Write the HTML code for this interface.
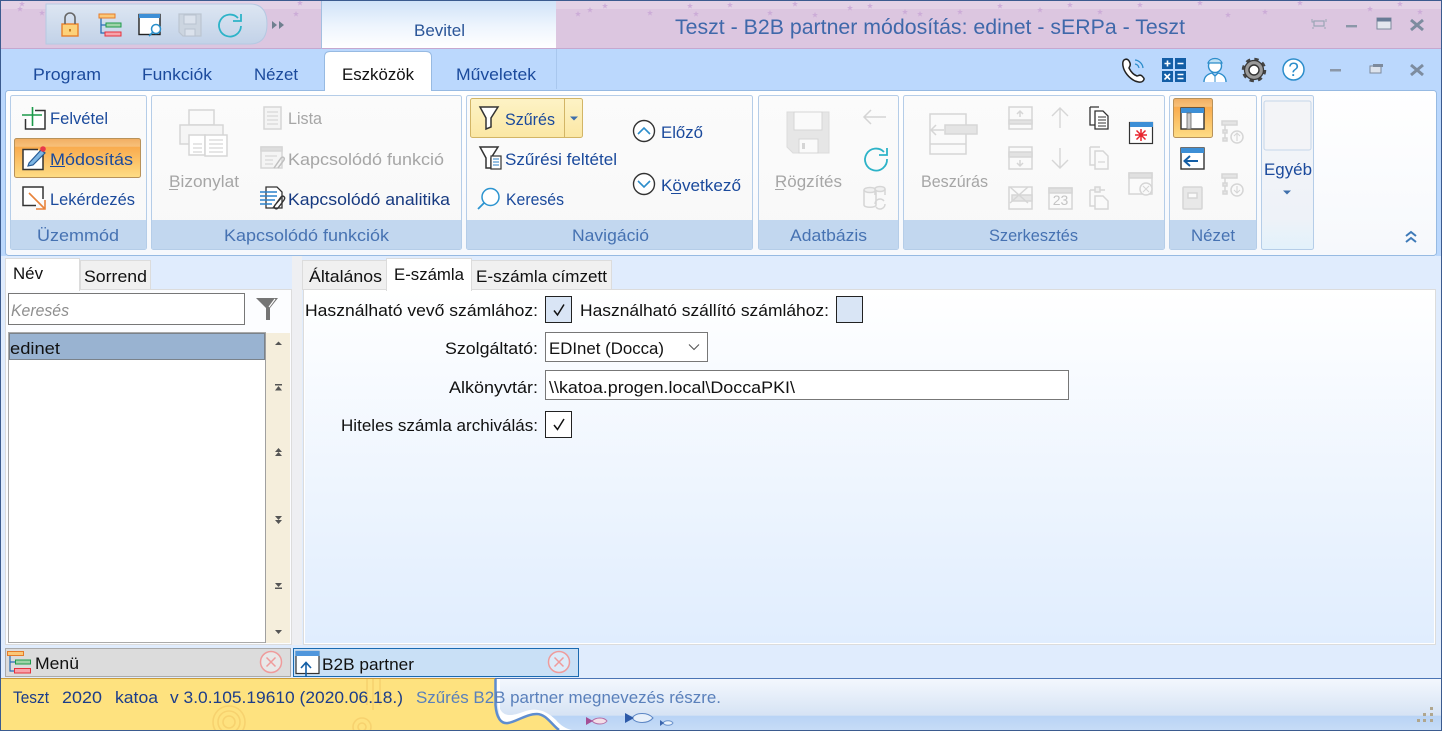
<!DOCTYPE html>
<html><head><meta charset="utf-8"><title>Teszt - B2B partner módosítás</title>
<style>
html,body{margin:0;padding:0;width:1442px;height:731px;overflow:hidden;background:#fff}
svg{display:block}
text{font-family:"Liberation Sans",sans-serif;font-size:16.5px;white-space:pre}
.r{fill:#1b4a9c}.g{fill:#a6a6a6}.l{fill:#4672b2}.k{fill:#111}
.ds{fill:none;stroke:#d6d6d6;stroke-width:1.5}
</style></head><body>
<svg width="1442" height="731" viewBox="0 0 1442 731" xmlns="http://www.w3.org/2000/svg">
<defs>
<linearGradient id="bev" x1="0" y1="0" x2="0" y2="1"><stop offset="0" stop-color="#cfe2f8"/><stop offset=".55" stop-color="#eef5fd"/><stop offset="1" stop-color="#fff"/></linearGradient>
<linearGradient id="rib" x1="0" y1="0" x2="0" y2="1"><stop offset="0" stop-color="#fff"/><stop offset="1" stop-color="#f6f8fc"/></linearGradient>
<linearGradient id="grp" x1="0" y1="0" x2="0" y2="1"><stop offset="0" stop-color="#fbfbfb"/><stop offset="1" stop-color="#f8f8f8"/></linearGradient>
<linearGradient id="ora" x1="0" y1="0" x2="0" y2="1"><stop offset="0" stop-color="#f1ae62"/><stop offset=".2" stop-color="#f7c07a"/><stop offset=".22" stop-color="#f9ab4e"/><stop offset="1" stop-color="#fedd85"/></linearGradient>
<linearGradient id="yel" x1="0" y1="0" x2="0" y2="1"><stop offset="0" stop-color="#fdf3c6"/><stop offset="1" stop-color="#fbe7a4"/></linearGradient>
<linearGradient id="egy" x1="0" y1="0" x2="0" y2="1"><stop offset="0" stop-color="#f4f5f8"/><stop offset=".8" stop-color="#eef2f8"/><stop offset="1" stop-color="#e2f1fb"/></linearGradient>
<linearGradient id="pan" x1="0" y1="0" x2="0" y2="1"><stop offset="0" stop-color="#fff"/><stop offset="1" stop-color="#e0edfe"/></linearGradient>
<linearGradient id="st" x1="0" y1="0" x2="0" y2="1"><stop offset="0" stop-color="#f4f8fe"/><stop offset=".72" stop-color="#d6e3f4"/><stop offset=".73" stop-color="#b8d3f5"/><stop offset="1" stop-color="#c6dcf7"/></linearGradient>
<linearGradient id="qat" x1="0" y1="0" x2="0" y2="1"><stop offset="0" stop-color="#dde6f2"/><stop offset="1" stop-color="#c2d2e8"/></linearGradient>
<polygon id="s" points="0,-3 .8,-1 3,-1 1.2,.4 1.9,2.6 0,1.2 -1.9,2.6 -1.2,.4 -3,-1 -.8,-1" fill="#c9a6d6"/>
</defs>

<!-- window base -->
<rect width="1442" height="731" fill="#e0ecfd"/>
<!-- title -->
<rect x="0" y="0" width="1442" height="49" fill="#dcc6e0"/>
<rect x="0" y="0" width="1442" height="9" fill="#e3d2e6"/>
<g opacity=".8">
<use href="#s" x="20" y="9"/><use href="#s" x="42" y="13"/><use href="#s" x="22" y="4"/><use href="#s" x="300" y="3"/><use href="#s" x="296" y="14"/><use href="#s" x="590" y="10"/><use href="#s" x="605" y="6"/><use href="#s" x="650" y="13"/><use href="#s" x="690" y="6"/><use href="#s" x="696" y="14"/><use href="#s" x="730" y="5"/><use href="#s" x="770" y="13"/><use href="#s" x="795" y="4"/><use href="#s" x="815" y="15"/><use href="#s" x="850" y="8"/><use href="#s" x="870" y="6"/><use href="#s" x="905" y="12"/><use href="#s" x="920" y="14"/><use href="#s" x="1040" y="10"/><use href="#s" x="1070" y="5"/><use href="#s" x="1100" y="12"/><use href="#s" x="1140" y="5"/><use href="#s" x="1200" y="3"/><use href="#s" x="1228" y="15"/><use href="#s" x="1265" y="12"/><use href="#s" x="1300" y="3"/><use href="#s" x="1370" y="9"/><use href="#s" x="1400" y="4"/><use href="#s" x="1420" y="12"/><use href="#s" x="578" y="14"/><use href="#s" x="1000" y="6"/><use href="#s" x="960" y="12"/>
</g>
<rect x="0" y="48" width="1442" height="1" fill="#c5a8cf"/>
<rect x="321" y="0" width="235" height="48" fill="url(#bev)"/>
<rect x="321" y="0" width="1" height="49" fill="#a3bfe0"/>
<!-- QAT -->
<path d="M46 4H250Q267 4 267 24Q267 44 250 44H46Z" fill="url(#qat)" stroke="#b5c9e2"/>
<g>
<rect x="62" y="24" width="16" height="12" fill="#fcd27b" stroke="#e77f2b" stroke-width="1.4"/><path d="M65 24V18a5 5 0 0 1 10 0v6" fill="none" stroke="#666" stroke-width="1.6"/><rect x="69" y="29" width="2" height="2.500" fill="#c77b22"/>
<path d="M101 17V33H105M101 25H106" fill="none" stroke="#2a6fb5" stroke-width="1.3"/><rect x="99" y="14" width="16" height="4" fill="#fbc878" stroke="#e67c2a"/><rect x="106" y="23" width="15" height="4" fill="#9ed3a8" stroke="#1f9a4a"/><rect x="105" y="32" width="16" height="4" fill="#f7a3ab" stroke="#e6323c"/>
<rect x="139" y="14.500" width="21" height="20" fill="#fff" stroke="#222" stroke-width="1.4"/><rect x="139" y="14" width="21" height="4" fill="#3d8fd6"/><circle cx="156" cy="29" r="4.500" fill="#fff" stroke="#2a8fcb" stroke-width="1.500"/><path d="M152.500 32.500 149 36" stroke="#2a8fcb" stroke-width="1.600"/>
<path d="M179 14H201V36H183L179 32Z" fill="#ccd5e0" stroke="#bcc5d1" stroke-width="1.200"/><rect x="184" y="15" width="12" height="9" fill="#dbe2ec" stroke="#b9c2cf"/><rect x="185" y="29" width="10" height="7" fill="#dbe2ec" stroke="#b9c2cf"/>
<path d="M238 18A11 11 0 1 0 241 26" fill="none" stroke="#2db3c8" stroke-width="1.800"/><path d="M233 21H241V14" fill="none" stroke="#2db3c8" stroke-width="1.800"/>
<path d="M272 21 277 25 272 29ZM279 21 284 25 279 29Z" fill="#6f7f8f"/>
</g>
<text x="414" y="36" textLength="51" lengthAdjust="spacingAndGlyphs" fill="#2a5598">Bevitel</text>
<text x="675" y="34" textLength="510" lengthAdjust="spacingAndGlyphs" style="font-size:21px" fill="#3f68aa">Teszt - B2B partner módosítás: edinet - sERPa - Teszt</text>
<!-- window buttons top -->
<g fill="none" stroke="#9aa5b5" stroke-width="1.2"><rect x="1314" y="21" width="10" height="5"/><path d="M1312 19v3h2M1326 19v3M1312 28h2M1326 28h-2" stroke-width="1"/></g>
<rect x="1346" y="25" width="11" height="2.400" fill="#8b97a8"/>
<rect x="1377" y="18" width="14" height="11" fill="#e3e6ee" stroke="#7d8a9c" stroke-width="1"/><rect x="1377" y="18" width="14" height="3.500" fill="#687b96"/>
<path d="M1411 20 1423 30M1423 20 1411 30" stroke="#7d8c9f" stroke-width="3"/>

<!-- ribbon tabs row -->
<rect x="0" y="49" width="1442" height="42" fill="#bbd8fd"/>
<rect x="556" y="49" width="1" height="40" fill="#a8c7ee"/>
<rect x="0" y="90" width="6" height="166" fill="#bbd8fd"/>
<rect x="1436" y="90" width="6" height="166" fill="#bbd8fd"/>
<rect x="0" y="0" width="1442" height="1" fill="#3b5b8f"/><rect x="0" y="0" width="1" height="731" fill="#3b5b8f"/><rect x="1441" y="0" width="1" height="731" fill="#3b5b8f"/>
<text x="33" y="80" textLength="68" lengthAdjust="spacingAndGlyphs" class="r">Program</text>
<text x="142" y="80" textLength="70" lengthAdjust="spacingAndGlyphs" class="r">Funkciók</text>
<text x="254" y="80" textLength="44" lengthAdjust="spacingAndGlyphs" class="r">Nézet</text>
<text x="456" y="80" textLength="80" lengthAdjust="spacingAndGlyphs" class="r">Műveletek</text>
<!-- ribbon panel -->
<rect x="5.500" y="90.500" width="1431" height="165" rx="3" fill="url(#rib)" stroke="#97bae2"/>
<path d="M324.500 91V57Q324.500 51.500 330 51.500H426Q431.500 51.500 431.500 57V91" fill="#fff" stroke="#97bae2"/><rect x="325" y="89" width="106" height="3" fill="#fff"/>
<text x="342" y="80" textLength="72" lengthAdjust="spacingAndGlyphs" fill="#111">Eszközök</text>

<!-- right-top icons -->
<path d="M1124 60c3-2 5 0 6 3s-1 4-1 5c2 4 5 7 8 8 1 0 3-2 5 0s3 3 1 5-5 1-8 0c-6-3-11-9-12-15-.5-3 0-5 1-6z" fill="#fff" stroke="#222" stroke-width="1.500"/>
<path d="M1135 60a9 9 0 0 1 8 8M1135 64a5 5 0 0 1 4 4" fill="none" stroke="#2c8dcb" stroke-width="1.300"/>
<rect x="1162" y="58" width="11" height="11" fill="#135ea6"/><rect x="1175" y="58" width="11" height="11" fill="#135ea6"/><rect x="1162" y="71" width="11" height="11" fill="#135ea6"/><rect x="1175" y="71" width="11" height="11" fill="#135ea6"/>
<path d="M1164.500 63.500h6M1167.500 60.500v6M1177.500 63.500h6M1164.500 74 1170 79.500M1170 74 1164.500 79.500M1177.500 74.500h6M1177.500 78.500h6" stroke="#fff" stroke-width="1.600"/>
<circle cx="1215" cy="66" r="6.500" fill="#fff" stroke="#2c8dcb" stroke-width="1.400"/><path d="M1208 63c2-6 12-6 14 0z" fill="#bfe0f4" stroke="#2c8dcb" stroke-width="1.200"/><path d="M1204 82c0-6 4-8 8-9l3 3 3-3c4 1 8 3 8 9" fill="#fff" stroke="#2c8dcb" stroke-width="1.400"/><path d="M1215 76v6" stroke="#2c8dcb"/>
<circle cx="1254" cy="70" r="10.500" fill="none" stroke="#444" stroke-width="3.500" stroke-dasharray="4.200 4.050"/>
<circle cx="1254" cy="70" r="9.500" fill="#9a9a9a" stroke="#3a3a3a" stroke-width="1.300"/>
<circle cx="1254" cy="70" r="5" fill="#fff" stroke="#333" stroke-width="1.400"/>
<circle cx="1293.500" cy="69.500" r="10.500" fill="#fff" stroke="#2c8dcb" stroke-width="1.500"/>
<text x="1293.500" y="76" text-anchor="middle" style="font-size:19px" fill="#2c8dcb">?</text>
<rect x="1330" y="69" width="11" height="2.500" fill="#8b97a8"/>
<rect x="1370" y="66" width="11" height="7" fill="#dde3ec" stroke="#7d8a9c"/><rect x="1373" y="64" width="10" height="3" fill="#7d8a9c"/>
<path d="M1411 65 1423 75M1423 65 1411 75" stroke="#7d8c9f" stroke-width="3"/>

<!-- groups -->
<g stroke="#b5cde8">
<rect x="10.500" y="95.500" width="136" height="154" rx="2" fill="url(#grp)"/>
<rect x="151.500" y="95.500" width="310" height="154" rx="2" fill="url(#grp)"/>
<rect x="466.500" y="95.500" width="286" height="154" rx="2" fill="url(#grp)"/>
<rect x="758.500" y="95.500" width="140" height="154" rx="2" fill="url(#grp)"/>
<rect x="903.500" y="95.500" width="261" height="154" rx="2" fill="url(#grp)"/>
<rect x="1169.500" y="95.500" width="87" height="154" rx="2" fill="url(#grp)"/>
<rect x="1261.500" y="95.500" width="52" height="154" rx="2" fill="url(#egy)"/>
</g>
<g fill="#c2d7ef">
<rect x="11" y="220" width="135" height="29"/><rect x="152" y="220" width="309" height="29"/><rect x="467" y="220" width="285" height="29"/><rect x="759" y="220" width="139" height="29"/><rect x="904" y="220" width="260" height="29"/><rect x="1170" y="220" width="86" height="29"/>
</g>
<rect x="1264" y="101" width="47" height="49" rx="2" fill="#f3f4f7" stroke="#c5d6ea"/>

<!-- Üzemmód -->
<rect x="14.500" y="138.500" width="126" height="39" rx="2" fill="url(#ora)" stroke="#b8925a"/>
<path d="M35 110.500H45V129H25.500V119" fill="#fff" stroke="#333" stroke-width="1.500"/>
<path d="M22 115H42M32.500 107V126" stroke="#1c9a4a" stroke-width="1.600"/>
<text x="50" y="124" textLength="58" lengthAdjust="spacingAndGlyphs" class="r">Felvétel</text>
<path d="M38 149.500H23V169.500H43V155" fill="#fff" stroke="#333" stroke-width="1.500"/>
<path d="M29 163 41 150 45 153 33 165 28 166Z" fill="#7eb6e4" stroke="#265a94" stroke-width="1.200"/><circle cx="43" cy="149" r="2.800" fill="#e8374a"/>
<text x="50" y="165" textLength="83" lengthAdjust="spacingAndGlyphs" class="r">Módosítás</text>
<rect x="50" y="166" width="15" height="1" fill="#1b4a9c"/>
<path d="M36 205.500H23V187H43V199" fill="#fff" stroke="#333" stroke-width="1.500"/>
<path d="M29 193 45 209M45 200V209H36" fill="none" stroke="#e8833a" stroke-width="1.600"/>
<text x="50" y="205" textLength="85" lengthAdjust="spacingAndGlyphs" class="r">Lekérdezés</text>
<text x="37" y="241" textLength="82" lengthAdjust="spacingAndGlyphs" class="l">Üzemmód</text>

<!-- Kapcsolódó -->
<g class="ds"><rect x="189" y="110" width="25" height="15" fill="#fafafa"/><rect x="180" y="125" width="43" height="19" fill="#f5f5f5"/><rect x="189" y="135" width="16" height="20" fill="#fff"/><rect x="205" y="135" width="22" height="21" fill="#fff"/><path d="M193 144h9M193 148h9M193 152h9M209 140h14M209 144h14M209 148h14M209 152h14" stroke-width="1.200"/></g>
<text x="169" y="187" textLength="70" lengthAdjust="spacingAndGlyphs" class="g">Bizonylat</text><rect x="169" y="189" width="9" height="1" fill="#a6a6a6"/>
<g class="ds"><rect x="264" y="107" width="17" height="22" fill="#f4f4f4"/><path d="M267 112h11M267 116h11M267 120h11M267 124h11" stroke-width="1.200"/></g>
<text x="288" y="124" textLength="34" lengthAdjust="spacingAndGlyphs" class="g">Lista</text>
<g class="ds"><rect x="261" y="147" width="21" height="21" fill="#f4f4f4"/><rect x="261" y="147" width="21" height="4" fill="#ddd"/><path d="M265 156h12M265 160h8M265 164h8" stroke-width="1.200"/><path d="M274 168 281 158c2-2 4 0 3 2l-6 8" stroke="#c0c0c0"/></g>
<text x="288" y="165" textLength="156" lengthAdjust="spacingAndGlyphs" class="g">Kapcsolódó funkció</text>
<path d="M266 187H277L282 192V208H266Z" fill="#fff" stroke="#333" stroke-width="1.300"/>
<path d="M260 192h17M260 196h17M260 200h15M260 204h12" stroke="#2c82cc" stroke-width="1.600"/>
<path d="M273 208 281 197c2-2 5 0 3 3l-6 8c-2 2-5 0-3-3l6-7" fill="none" stroke="#333" stroke-width="1.400"/>
<text x="288" y="205" textLength="162" lengthAdjust="spacingAndGlyphs" fill="#173a80">Kapcsolódó analitika</text>
<text x="224" y="241" textLength="165" lengthAdjust="spacingAndGlyphs" class="l">Kapcsolódó funkciók</text>

<!-- Navigáció -->
<rect x="470.500" y="98.500" width="112" height="39" rx="2" fill="url(#yel)" stroke="#d2b566"/>
<rect x="564" y="99" width="1" height="38" fill="#d2b566"/>
<path d="M570 116.500h8l-4 4z" fill="#3e6fab"/>
<path d="M480 107H498L491 118V127L486 129V118Z" fill="#fff" stroke="#333" stroke-width="1.500"/>
<text x="505" y="125" textLength="50" lengthAdjust="spacingAndGlyphs" class="r">Szűrés</text>
<path d="M480 147H498L491 158V168L486 168V158Z" fill="#fff" stroke="#333" stroke-width="1.500"/>
<rect x="491" y="156" width="10" height="13" fill="#fff" stroke="#333" stroke-width="1.200"/><path d="M493 159h6M493 162h6M493 165h6" stroke="#2c7fc6"/>
<text x="505" y="165" textLength="112" lengthAdjust="spacingAndGlyphs" class="r">Szűrési feltétel</text>
<circle cx="490.500" cy="197" r="8.500" fill="#fff" stroke="#2c94d0" stroke-width="1.500"/><path d="M484 203 478 209" stroke="#2c94d0" stroke-width="1.800"/>
<text x="506" y="205" textLength="58" lengthAdjust="spacingAndGlyphs" class="r">Keresés</text>
<circle cx="644" cy="131" r="10.500" fill="#fff" stroke="#333" stroke-width="1.400"/><path d="M638 134 644 128 650 134" fill="none" stroke="#2c8dcb" stroke-width="1.600"/>
<text x="661" y="138" textLength="42" lengthAdjust="spacingAndGlyphs" class="r">Előző</text>
<circle cx="644" cy="184" r="10.500" fill="#fff" stroke="#333" stroke-width="1.400"/><path d="M638 181 644 187 650 181" fill="none" stroke="#2c8dcb" stroke-width="1.600"/>
<text x="661" y="191" textLength="80" lengthAdjust="spacingAndGlyphs" class="r">Következő</text><rect x="671" y="193" width="10" height="1" fill="#1b4a9c"/>
<text x="572" y="241" textLength="77" lengthAdjust="spacingAndGlyphs" class="l">Navigáció</text>

<!-- Adatbázis -->
<path d="M787 112H829V153H793L787 147Z" fill="#e6e6e6" stroke="#dcdcdc"/><rect x="794" y="112" width="28" height="18" fill="#fafafa" stroke="#d5d5d5"/><rect x="799" y="139" width="19" height="14" fill="#fafafa" stroke="#d5d5d5"/><rect x="802" y="143" width="3" height="6" fill="#d5d5d5"/>
<text x="775" y="187" textLength="67" lengthAdjust="spacingAndGlyphs" class="g">Rögzítés</text><rect x="775" y="189" width="9" height="1" fill="#a6a6a6"/>
<path d="M864 117H886M871 110 864 117 871 124" fill="none" stroke="#d4d4d4" stroke-width="1.500"/>
<path d="M884 152A11 11 0 1 0 887 159" fill="none" stroke="#2db3c8" stroke-width="1.800"/><path d="M879 155H887V148" fill="none" stroke="#2db3c8" stroke-width="1.800"/>
<g class="ds"><ellipse cx="870" cy="190" rx="6" ry="2.500" fill="#f0f0f0"/><ellipse cx="880" cy="189" rx="5" ry="2.500" fill="#f0f0f0"/><path d="M864 190V205c0 3 12 3 12 0V190M875 189v6M885 189v6" fill="none"/><path d="M875 204a5 5 0 0 1 9-3M885 204a5 5 0 0 1-9 3" fill="none"/></g>
<text x="790" y="241" textLength="77" lengthAdjust="spacingAndGlyphs" class="l">Adatbázis</text>

<!-- Szerkesztés -->
<g class="ds"><path d="M930 114H966V154H930Z" fill="#fafafa"/><rect x="945" y="125" width="32" height="9" fill="#e4e4e4"/><path d="M930 130H944M936 125 931 130 936 135" fill="none"/><path d="M930 144H966"/></g>
<text x="921" y="187" textLength="67" lengthAdjust="spacingAndGlyphs" class="g">Beszúrás</text>
<g class="ds"><rect x="1009" y="107" width="23" height="22" fill="#fafafa"/><rect x="1009" y="120" width="23" height="4" fill="#e2e2e2"/><path d="M1020 117v-6M1017 114l3-3 3 3" fill="none"/>
<rect x="1009" y="147" width="23" height="22" fill="#fafafa"/><rect x="1009" y="152" width="23" height="5" fill="#e2e2e2"/><path d="M1020 160v6M1017 163l3 3 3-3" fill="none"/>
<rect x="1009" y="187" width="23" height="22" fill="#fafafa"/><rect x="1012" y="195" width="20" height="6" fill="#e6e6e6"/><path d="M1010 187l18 16M1028 187l-18 16" fill="none"/>
<path d="M1060 108V128M1052 116l8-8 8 8M1060 168V148M1052 160l8 8 8-8" fill="none" stroke-width="1.400"/>
<rect x="1049" y="188" width="23" height="21" fill="#fafafa"/><rect x="1049" y="188" width="23" height="5" fill="#e0e0e0"/>
<path d="M1090 147h10M1090 147v18h5M1095 151h8l5 5v13h-13z" fill="#fafafa"/><path d="M1098 162h7" stroke-width="1.200"/>
<path d="M1090 190h15M1090 190v16h5M1095 196h8l5 5v8h-13z" fill="#fafafa"/><rect x="1095" y="187" width="5" height="5" fill="#f0f0f0"/>
<rect x="1129" y="173" width="23" height="21" fill="#fafafa"/><rect x="1129" y="173" width="23" height="5" fill="#e0e0e0"/><circle cx="1146" cy="189" r="6" fill="#fafafa"/><path d="M1143 186l6 6M1149 186l-6 6" stroke-width="1.100"/></g>
<text x="1060.500" y="205" text-anchor="middle" style="font-size:14px" fill="#c4c4c4">23</text>
<path d="M1090 107h9M1090 107v18h5" fill="#fff" stroke="#333" stroke-width="1.300"/><path d="M1095 111h8l5 5v13h-13z" fill="#fff" stroke="#333" stroke-width="1.300"/><path d="M1098 117h8M1098 120h8M1098 123h8M1098 126h8" stroke="#333"/>
<rect x="1129.500" y="122.500" width="23" height="21" fill="#fff" stroke="#333" stroke-width="1.200"/><rect x="1130" y="122" width="23" height="5" fill="#3d8fd6"/>
<path d="M1141 129V141M1135 135H1147M1136.500 130.500 1145.500 139.500M1145.500 130.500 1136.500 139.500" stroke="#e8262f" stroke-width="1.500"/>
<text x="989" y="241" textLength="89" lengthAdjust="spacingAndGlyphs" class="l">Szerkesztés</text>

<!-- Nézet -->
<rect x="1173.500" y="98.500" width="39" height="39" rx="2" fill="url(#ora)" stroke="#b8925a"/>
<rect x="1181" y="108" width="23" height="21" fill="#fff" stroke="#333" stroke-width="1.400"/><rect x="1181" y="108" width="23" height="5" fill="#3d8fd6"/><rect x="1187" y="113" width="4" height="16" fill="#ccc" stroke="#666" stroke-width=".8"/>
<rect x="1181" y="148" width="23" height="21" fill="#fff" stroke="#333" stroke-width="1.400"/><rect x="1181" y="148" width="23" height="5" fill="#3d8fd6"/><path d="M1198 161H1185M1190 156 1184.500 161 1190 166" fill="none" stroke="#135ea6" stroke-width="2"/>
<g class="ds"><rect x="1183" y="187" width="19" height="22" rx="1" fill="#e8e8e8"/><rect x="1188" y="193" width="9" height="5" fill="#fafafa"/>
<rect x="1222" y="121" width="15" height="4" fill="#e4e4e4"/><path d="M1225 125v15"/><rect x="1223" y="130" width="4" height="3" fill="#e4e4e4"/><rect x="1223" y="138" width="4" height="3" fill="#e4e4e4"/><circle cx="1237" cy="137" r="6" fill="#fafafa"/><path d="M1237 141v-7M1234 136l3-3 3 3" fill="none" stroke-width="1.100"/>
<rect x="1222" y="174" width="15" height="4" fill="#e4e4e4"/><path d="M1225 178v15"/><rect x="1223" y="183" width="4" height="3" fill="#e4e4e4"/><rect x="1223" y="191" width="4" height="3" fill="#e4e4e4"/><circle cx="1237" cy="190" r="6" fill="#fafafa"/><path d="M1237 186v7M1234 190l3 3 3-3" fill="none" stroke-width="1.100"/></g>
<text x="1191" y="241" textLength="44" lengthAdjust="spacingAndGlyphs" class="l">Nézet</text>

<text x="1264" y="175" textLength="48" lengthAdjust="spacingAndGlyphs" class="r">Egyéb</text>
<path d="M1283 190.500h8l-4 4z" fill="#3e6fab"/>
<path d="M1406 236l5-4 5 4M1406 242l5-4 5 4" fill="none" stroke="#3e7ab8" stroke-width="2"/>

<!-- content area -->
<rect x="292" y="256" width="10" height="389" fill="#eeeff2"/>
<!-- left tabs/panel -->
<rect x="5" y="289" width="287" height="356" fill="#fcfdff"/>
<rect x="5.500" y="289.500" width="286" height="355" fill="none" stroke="#dcdcdc"/>
<rect x="80.500" y="260.500" width="70" height="29" fill="#f0f0f0" stroke="#dcdcdc"/>
<rect x="5.500" y="258.500" width="74" height="32" fill="#fff" stroke="#dcdcdc"/><rect x="6" y="288" width="73" height="3" fill="#fff"/>
<text x="13" y="279" textLength="30" lengthAdjust="spacingAndGlyphs" class="k">Név</text>
<text x="84" y="282" textLength="63" lengthAdjust="spacingAndGlyphs" class="k">Sorrend</text>
<rect x="8.500" y="293.500" width="236" height="31" fill="#fff" stroke="#777"/>
<text x="11" y="316" textLength="58" lengthAdjust="spacingAndGlyphs" style="font-style:italic" fill="#8e8e8e">Keresés</text>
<path d="M256 298H278L270 308V320H266V308Z" fill="#757575"/><path d="M269 307 275 299" stroke="#fff" stroke-width="1.200"/>
<rect x="8.500" y="332.500" width="257" height="310" fill="#fff" stroke="#aaa"/>
<rect x="266" y="333" width="24" height="310" fill="#f5eedc"/><rect x="265" y="333" width="1" height="310" fill="#a0a0a0"/>
<rect x="9" y="333" width="256" height="27" fill="#99b3d1"/><rect x="9.500" y="333.500" width="255" height="26" fill="none" stroke="#5b5244" stroke-dasharray="1 1"/>
<text x="10" y="354" textLength="50" lengthAdjust="spacingAndGlyphs" class="k">edinet</text>
<g fill="#555">
<path d="M275 345 278.500 341.500 282 345Z"/>
<path d="M275 384h7v1.500h-7zM275 390.500 278.500 386 282 390.500Z"/>
<path d="M275 452 278.500 448 282 452ZM275 456 278.500 452 282 456Z"/>
<path d="M275 516 278.500 520 282 516ZM275 520 278.500 524 282 520Z"/>
<path d="M275 583 278.500 587 282 583ZM275 587.500h7v1.500h-7z"/>
<path d="M275 630 278.500 634 282 630Z"/>
</g>
<!-- right tabs/panel -->
<rect x="303.500" y="289.500" width="1132" height="355" fill="#fff" stroke="#dcdcdc"/>
<rect x="305" y="291" width="1129" height="352" fill="url(#pan)"/>
<rect x="302.500" y="260.500" width="84" height="29" fill="#f0f0f0" stroke="#dcdcdc"/>
<rect x="471.500" y="260.500" width="140" height="29" fill="#f0f0f0" stroke="#dcdcdc"/>
<rect x="386.500" y="258.500" width="85" height="32" fill="#fff" stroke="#dcdcdc"/><rect x="387" y="288" width="84" height="4" fill="#fff"/>
<text x="309" y="282" textLength="73" lengthAdjust="spacingAndGlyphs" class="k">Általános</text>
<text x="394" y="280" textLength="70" lengthAdjust="spacingAndGlyphs" class="k">E-számla</text>
<text x="476" y="282" textLength="131" lengthAdjust="spacingAndGlyphs" class="k">E-számla címzett</text>
<!-- form -->
<text x="305" y="316" textLength="233" lengthAdjust="spacingAndGlyphs" class="k">Használható vevő számlához:</text>
<rect x="545.500" y="296.500" width="26" height="26" fill="#d9e5f5" stroke="#222"/>
<path d="M554 310.500 557.500 315 564 304.500" fill="none" stroke="#111" stroke-width="1.500"/>
<text x="580" y="316" textLength="249" lengthAdjust="spacingAndGlyphs" class="k">Használható szállító számlához:</text>
<rect x="836.500" y="296.500" width="26" height="26" fill="#d9e5f5" stroke="#222"/>
<text x="445" y="354" textLength="93" lengthAdjust="spacingAndGlyphs" class="k">Szolgáltató:</text>
<rect x="545.500" y="332.500" width="162" height="29" fill="#fff" stroke="#777"/>
<text x="549" y="354" textLength="115" lengthAdjust="spacingAndGlyphs" class="k">EDInet (Docca)</text>
<path d="M689 344.500 694 349.500 699 344.500" fill="none" stroke="#555" stroke-width="1.100"/>
<text x="449" y="393" textLength="89" lengthAdjust="spacingAndGlyphs" class="k">Alkönyvtár:</text>
<rect x="545.500" y="370.500" width="523" height="29" fill="#fff" stroke="#777"/>
<text x="549" y="393" textLength="246" lengthAdjust="spacingAndGlyphs" class="k">\\katoa.progen.local\DoccaPKI\</text>
<text x="341" y="431" textLength="197" lengthAdjust="spacingAndGlyphs" class="k">Hiteles számla archiválás:</text>
<rect x="545.500" y="411.500" width="26" height="26" fill="#fff" stroke="#222"/>
<path d="M554 425 557.500 429.500 564 419" fill="none" stroke="#111" stroke-width="1.500"/>

<!-- bottom tabs -->
<rect x="5.500" y="648.500" width="285" height="28" fill="#dcdcdc" stroke="#aaa"/>
<path d="M10 655V671H14M10 662H15" fill="none" stroke="#2a6fb5" stroke-width="1.200"/><rect x="7.500" y="651.500" width="16" height="4" fill="#fbc878" stroke="#e67c2a"/><rect x="15.500" y="660" width="15" height="4" fill="#9ed3a8" stroke="#1f9a4a"/><rect x="14.500" y="668.500" width="16" height="4.500" fill="#f7a3ab" stroke="#e6323c"/>
<text x="35" y="669" textLength="44" lengthAdjust="spacingAndGlyphs" class="k">Menü</text>
<circle cx="271" cy="662" r="10.500" fill="#fff" fill-opacity=".35" stroke="#ef9b9b" stroke-width="1.500"/><path d="M266.500 657.500 275.500 666.500M275.500 657.500 266.500 666.500" stroke="#ef9b9b" stroke-width="1.500"/>
<rect x="293.500" y="648.500" width="285" height="28" fill="#c9e0f6" stroke="#1a6ab0"/>
<rect x="296" y="651.500" width="23" height="22" fill="#fff" stroke="#333" stroke-width="1.200"/><rect x="295.500" y="651" width="24" height="5" fill="#4f96dc"/><path d="M306 677V663M301 668 306 662.500 311 668" fill="none" stroke="#135ea6" stroke-width="1.600"/>
<text x="322" y="670" textLength="92" lengthAdjust="spacingAndGlyphs" class="k">B2B partner</text>
<circle cx="559" cy="662" r="10.500" fill="#fff" fill-opacity=".35" stroke="#ef9b9b" stroke-width="1.500"/><path d="M554.500 657.500 563.500 666.500M563.500 657.500 554.500 666.500" stroke="#ef9b9b" stroke-width="1.500"/>

<!-- status bar -->
<rect x="1" y="678" width="1440" height="52" fill="url(#st)"/>
<path d="M500 679V709C504 717 512 716 523 712C537 706 548 712 556 720C560 725 566 729 572 730H558C552 725 548 720 537 715C525 718 510 728 503 722C499 718 498 712 496 679Z" fill="#fff"/>
<path d="M1 679H495V705C496 718 501 724 508 723C516 722 526 714 537 714C546 714 552 725 559 730H1Z" fill="#fee27f"/>
<path d="M495.500 679V705C496.500 718 501 724 508 723C516 722 526 714 537 714C546 714 552 725 559 730" fill="none" stroke="#5f8dcf" stroke-width="2.500"/>
<rect x="1" y="678" width="494" height="1" fill="#c99a3c"/><rect x="495" y="678" width="946" height="1" fill="#4a74b4"/>
<g fill="none" stroke="#f7d26f" stroke-width="1.600"><circle cx="229" cy="722" r="6"/><circle cx="229" cy="722" r="11"/><circle cx="229" cy="722" r="16"/><circle cx="362" cy="727" r="4"/><circle cx="362" cy="727" r="9"/><path d="M367 679V705M373 679V710M380 679V705"/></g>
<text x="13" y="703" textLength="36" lengthAdjust="spacingAndGlyphs" fill="#1c3d8a">Teszt</text>
<text x="62" y="703" textLength="40" lengthAdjust="spacingAndGlyphs" fill="#1c3d8a">2020</text>
<text x="115" y="703" textLength="43" lengthAdjust="spacingAndGlyphs" fill="#1c3d8a">katoa</text>
<text x="170" y="703" textLength="233" lengthAdjust="spacingAndGlyphs" fill="#1c3d8a">v 3.0.105.19610 (2020.06.18.)</text>
<text x="416" y="703" textLength="305" lengthAdjust="spacingAndGlyphs" fill="#5a80bb">Szűrés B2B partner megnevezés részre.</text>
<g>
<path d="M592 721C596 717 604 717 607 721C604 725 596 725 592 721Z" fill="#f3dfe9" stroke="#b46fa6"/><path d="M593 721 586 717V725Z" fill="#a44f96"/>
<path d="M632 718C636 712 648 712 653 718C648 724 636 724 632 718Z" fill="#e8f0fa" stroke="#5c86c4"/><path d="M634 718 625 713V723Z" fill="#2d5aa8"/>
<path d="M663 723C665 720 671 720 673 723C671 726 665 726 663 723Z" fill="#eaf2fb" stroke="#6b93cc"/><path d="M664 723 660 720V726Z" fill="#3c66ad"/>
</g>
<g fill="#b0a68e"><rect x="1430" y="707" width="3" height="3"/><rect x="1423" y="713" width="3" height="3"/><rect x="1430" y="713" width="3" height="3"/><rect x="1417" y="719" width="3" height="3"/><rect x="1423" y="719" width="3" height="3"/><rect x="1430" y="719" width="3" height="3"/></g>
<rect x="0" y="730" width="1442" height="1" fill="#3b5b8f"/>
</svg>
</body></html>
